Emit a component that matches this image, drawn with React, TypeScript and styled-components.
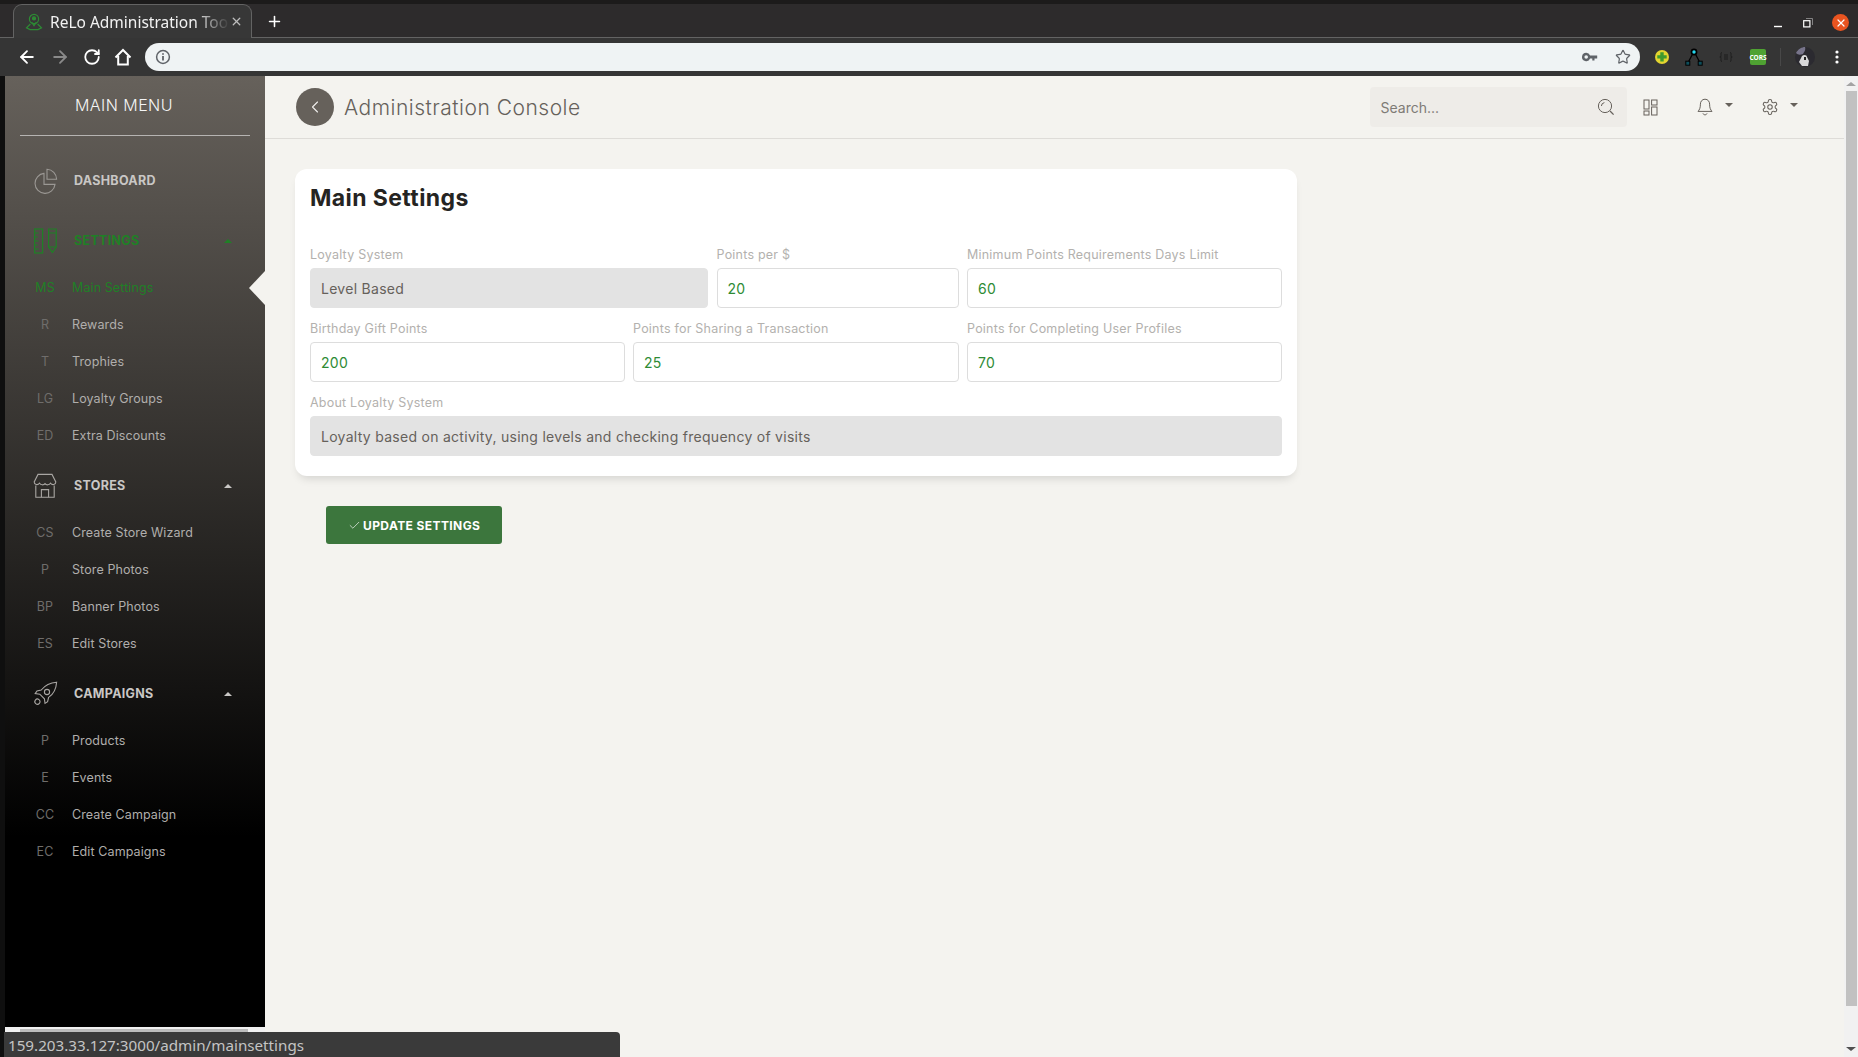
import React from 'react';
import styled, { createGlobalStyle } from 'styled-components';
import { ArrowLeft, ArrowRight, RotateCw, Star, Plus, X, Check, ChevronLeft } from 'lucide-react';

const GlobalStyle = createGlobalStyle`
  html, body {
    margin: 0;
    padding: 0;
    height: 100%;
    overflow: hidden;
    background: #f4f3ef;
  }
  #root { height: 100%; }
  * { box-sizing: border-box; }
`;

const uiFont = `Inter, "Open Sans", sans-serif`;
const chromeFont = `"Noto Sans", "Open Sans", sans-serif`;

const Page = styled.div`
  position: relative;
  display: flex;
  flex-direction: column;
  height: 100vh;
  overflow: hidden;
  font-family: ${uiFont};
`;

/* browser chrome */
const TabStrip = styled.div`
  display: flex;
  align-items: flex-end;
  height: 38px;
  padding-left: 13px;
  background: #2d2b2c;
  border-top: 4px solid #1c1b1b;
  border-bottom: 1px solid #636363;
`;

const Tab = styled.div`
  display: flex;
  align-items: center;
  width: 239px;
  height: 34px;
  margin-bottom: -1px;
  padding: 0 8px 0 11px;
  background: #373737;
  border: 1px solid #636363;
  border-bottom: none;
  border-radius: 9px 9px 0 0;
  color: #f2f2f2;
  font-family: ${chromeFont};
  font-size: 15.5px;
`;

const TabTitle = styled.span`
  flex: 1;
  margin-left: 7px;
  white-space: nowrap;
  -webkit-mask-image: linear-gradient(to right, #000 80%, transparent 100%);
  mask-image: linear-gradient(to right, #000 80%, transparent 100%);
`;

const NewTab = styled.div`
  display: flex;
  margin: 0 0 7px 14px;
  color: #fff;
`;

const WindowControls = styled.div`
  display: flex;
  align-items: center;
  gap: 19px;
  margin-left: auto;
  margin-right: 9px;
  margin-bottom: 6px;
  color: #fff;
`;

const CloseDot = styled.div`
  display: flex;
  align-items: center;
  justify-content: center;
  width: 17px;
  height: 17px;
  border-radius: 50%;
  background: #e95420;
  color: #fff;
`;

const Toolbar = styled.div`
  display: flex;
  align-items: center;
  height: 38px;
  padding: 0 10px 0 17px;
  background: #353535;
  color: #fff;
`;

const NavButtons = styled.div`
  display: flex;
  align-items: center;
  gap: 13px;
  margin-right: 13px;
`;

const Omnibox = styled.div`
  display: flex;
  flex: 1;
  align-items: center;
  height: 28px;
  padding: 0 9px 0 10px;
  border-radius: 14px;
  background: #eff3f4;
  color: #5f6368;
`;

const OmniRight = styled.div`
  display: flex;
  align-items: center;
  gap: 17px;
  margin-left: auto;
`;

const Extensions = styled.div`
  display: flex;
  align-items: center;
  margin-left: 11px;
  gap: 10px;
`;

const ExtSlot = styled.div`
  display: flex;
  align-items: center;
  justify-content: center;
  width: 22px;
  height: 28px;
`;

const CorsBadge = styled.div`
  display: flex;
  align-items: center;
  justify-content: center;
  width: 16px;
  height: 16px;
  border-radius: 2px;
  background: #4fa232;
  color: #fff;
  font-family: ${chromeFont};
  font-size: 6.5px;
  font-weight: 700;
`;

const ExtDivider = styled.div`
  width: 1px;
  height: 18px;
  margin: 0 3px 0 1px;
  background: #484848;
`;

/* page body */
const Body = styled.div`
  display: flex;
  flex: 1;
  min-height: 0;
  border-left: 5px solid #0f0f0f;
`;

const SideColumn = styled.div`
  display: flex;
  flex-direction: column;
  flex: 0 0 260px;
`;

const Sidebar = styled.aside`
  flex: 1;
  padding: 0;
  background: linear-gradient(to bottom, #66615b 0%, #000 80%);
`;

const SideScroll = styled.div`
  flex: 0 0 30px;
  padding: 2px 17px 0 15px;
  background: #f1f1f1;
`;

const SideScrollThumb = styled.div`
  height: 10px;
  background: #bcbcbc;
`;

const Brand = styled.div`
  height: 60px;
  margin: 0 15px;
  padding: 19px 0 0 55px;
  border-bottom: 1px solid rgba(255, 255, 255, 0.55);
  color: #f5f5f5;
  font-size: 16px;
  font-weight: 300;
  letter-spacing: 0.45px;
  line-height: 20px;
`;

const SideNav = styled.nav`
  padding-top: 22px;
`;

const Group = styled.div`
  margin-bottom: 9px;
  &:first-child {
    margin-bottom: 14px;
  }
`;

const GroupHead = styled.div<{ $active?: boolean }>`
  display: flex;
  align-items: center;
  height: 46px;
  padding: 0 33px 1px 25px;
  color: ${({ $active }) => ($active ? '#1f8026' : '#c9c7c5')};
  font-size: 12.5px;
  font-weight: 700;
  letter-spacing: 0.3px;
`;

const IconBox = styled.span`
  display: flex;
  align-items: center;
  justify-content: center;
  width: 30px;
  margin-right: 14px;
`;

const UpCaret = styled.span`
  margin-left: auto;
  border-left: 4px solid transparent;
  border-right: 4px solid transparent;
  border-bottom: 4px solid currentColor;
`;

const SubList = styled.div`
  margin-top: 5px;
`;

const SubItem = styled.div<{ $active?: boolean }>`
  position: relative;
  display: flex;
  align-items: center;
  height: 37px;
  padding-left: 25px;
  color: ${({ $active }) => ($active ? '#1f8026' : '#b0aeac')};
  font-size: 12.5px;
  letter-spacing: 0.1px;
`;

const SubAbbr = styled.span<{ $active?: boolean }>`
  width: 30px;
  margin-right: 12px;
  text-align: center;
  color: ${({ $active }) => ($active ? '#1f8026' : '#6f6d6b')};
`;

const ActiveNotch = styled.span`
  position: absolute;
  right: 0;
  top: 2px;
  border-top: 17px solid transparent;
  border-bottom: 17px solid transparent;
  border-right: 16px solid #f4f3ef;
`;

const Main = styled.main`
  display: flex;
  flex-direction: column;
  flex: 1;
  min-width: 0;
`;

const TopBar = styled.header`
  display: flex;
  align-items: center;
  flex: 0 0 63px;
  padding: 0 46px 0 31px;
  border-bottom: 1px solid #dedcd8;
`;

const BackCircle = styled.div`
  display: flex;
  align-items: center;
  justify-content: center;
  width: 38px;
  height: 38px;
  margin-right: 10px;
  border-radius: 50%;
  background: #66615b;
  color: #f0efed;
`;

const PageTitle = styled.div`
  color: #66615b;
  font-size: 21px;
  font-weight: 300;
  letter-spacing: 0.5px;
`;

const SearchBox = styled.div`
  display: flex;
  align-items: center;
  justify-content: space-between;
  width: 257px;
  height: 40px;
  margin-left: auto;
  padding: 0 12px 0 11px;
  border-radius: 4px;
  background: #eeece8;
  color: #7e7b76;
  font-size: 14px;
`;

const TopIcon = styled.div<{ $gap: number }>`
  display: flex;
  align-items: center;
  margin-left: ${({ $gap }) => $gap}px;
  color: #66615b;
`;

const DownCaret = styled.span<{ $gap: number }>`
  margin-left: ${({ $gap }) => $gap}px;
  margin-bottom: 4px;
  border-left: 4px solid transparent;
  border-right: 4px solid transparent;
  border-top: 4px solid #66615b;
`;

const Content = styled.div`
  padding: 30px;
`;

const Card = styled.section`
  width: 1002px;
  padding: 15px;
  border-radius: 12px;
  background: #fff;
  box-shadow: 0 6px 10px -4px rgba(0, 0, 0, 0.15);
`;

const CardTitle = styled.h2`
  margin: 0 0 31px;
  color: #252422;
  font-size: 23px;
  font-weight: 700;
  letter-spacing: 0.4px;
  line-height: 28px;
`;

const FieldRow = styled.div<{ $cols: string }>`
  display: grid;
  grid-template-columns: ${({ $cols }) => $cols};
  column-gap: 8.5px;
  margin-bottom: 9px;
  &:last-child {
    margin-bottom: 5px;
  }
`;

const Label = styled.div`
  height: 25px;
  color: #b3b1ae;
  font-size: 12.5px;
  letter-spacing: 0.22px;
  line-height: 24px;
  white-space: nowrap;
`;

const Input = styled.div<{ $disabled?: boolean }>`
  display: flex;
  align-items: center;
  height: 40px;
  padding: 0 10px;
  border: 1px solid ${({ $disabled }) => ($disabled ? '#e3e3e3' : '#dddddd')};
  border-radius: 4px;
  background: ${({ $disabled }) => ($disabled ? '#e3e3e3' : '#fff')};
  color: ${({ $disabled }) => ($disabled ? '#66615b' : '#2e8b34')};
  font-size: 14px;
  letter-spacing: 0.28px;
`;

const SubmitButton = styled.button`
  display: flex;
  align-items: center;
  gap: 2px;
  width: 176px;
  height: 38px;
  margin: 30px 0 0 31px;
  padding: 0 0 0 22px;
  border: none;
  border-radius: 3px;
  background: #3c763d;
  color: #fff;
  font-family: ${uiFont};
  font-size: 12px;
  font-weight: 700;
  letter-spacing: 0.4px;
`;

const PageScroll = styled.div`
  display: flex;
  flex-direction: column;
  flex: 0 0 14px;
  align-items: center;
  background: #f1f1f1;
`;

const ScrollArrowUp = styled.div`
  margin: 6px 0 5px;
  border-left: 5px solid transparent;
  border-right: 5px solid transparent;
  border-bottom: 4px solid #a3a3a3;
`;

const ScrollArrowDown = styled.div`
  margin-top: auto;
  margin-bottom: 6px;
  border-left: 5px solid transparent;
  border-right: 5px solid transparent;
  border-top: 4px solid #505050;
`;

const ScrollThumb = styled.div`
  width: 11px;
  height: 915px;
  background: #c1c1c1;
`;

const StatusBubble = styled.div`
  position: absolute;
  left: 4px;
  bottom: 0;
  display: flex;
  align-items: center;
  width: 616px;
  height: 25px;
  padding-left: 4px;
  border-radius: 0 4px 0 0;
  background: #3a3a3a;
  color: #c4c4c4;
  font-family: ${chromeFont};
  font-size: 15.2px;
`;

const FaviconIcon = () => (
  <svg width="18" height="18" viewBox="0 0 18 18" fill="none" stroke="#2d8a34" strokeWidth="1.2">
    <circle cx="9" cy="6" r="4.6" />
    <circle cx="9" cy="5.4" r="1.5" fill="#2d8a34" />
    <path d="M6.6 9.2 9 12.6l2.4-3.4" />
    <path d="M5.4 11 1.5 14.8 5 16.6h8l3.5-1.8-3.9-3.8" />
  </svg>
);

const HomeIcon = () => (
  <svg width="18" height="18" viewBox="0 0 18 18" fill="none" stroke="#fff" strokeWidth="2">
    <path d="M1.5 9.5 9 2l7.5 7.5" strokeLinejoin="miter" />
    <path d="M4.2 8v8.4h9.6V8" />
  </svg>
);

const InfoIcon = () => (
  <svg width="16" height="16" viewBox="0 0 16 16" fill="none" stroke="#5f6368" strokeWidth="1.5">
    <circle cx="8" cy="8" r="6.4" />
    <path d="M8 7v4.6M8 4.2v1.6" strokeWidth="1.8" />
  </svg>
);

const KeyIcon = () => (
  <svg width="16" height="10" viewBox="0 0 16 10" fill="#5f6368">
    <path d="M4.2.8a4.2 4.2 0 1 0 3.9 5.8h2.2v2h2.2v-2h2.7V3.4H8.1A4.2 4.2 0 0 0 4.2.8Zm0 2.4a1.8 1.8 0 1 1 0 3.6 1.8 1.8 0 0 1 0-3.6Z" />
  </svg>
);

const MinIcon = () => (
  <svg width="10" height="10" viewBox="0 0 10 10" stroke="#fff" strokeWidth="1.4">
    <path d="M0 8.5h8" />
  </svg>
);

const RestoreIcon = () => (
  <svg width="10" height="10" viewBox="0 0 10 10" fill="none" stroke="#fff">
    <rect x="0.7" y="2.7" width="6.2" height="6.2" strokeWidth="1.2" />
    <path d="M3 .5h6.5V7" stroke="#999" strokeWidth="0.8" />
  </svg>
);

const ExtAddonIcon = () => (
  <svg width="16" height="16" viewBox="0 0 16 16">
    <circle cx="8" cy="8" r="7" fill="#e3d530" />
    <path d="M6.3 3.2h3.4v3h3v3.4h-3v3H6.3v-3h-3V6.2h3Z" fill="#3f9a2e" />
  </svg>
);

const ExtNodeIcon = () => (
  <svg width="18" height="18" viewBox="0 0 18 18" fill="none">
    <path d="M7.6 6 3.4 14M10.4 6l4.2 8" stroke="#000" strokeWidth="1.3" />
    <circle cx="9" cy="4" r="3.4" fill="#000" />
    <circle cx="9" cy="4" r="1.7" fill="#25d7ee" />
    <rect x="0.8" y="13.2" width="4" height="4" fill="#0d4f5c" stroke="#000" />
    <rect x="13.2" y="13.2" width="4" height="4" fill="#0d4f5c" stroke="#000" />
  </svg>
);

const ExtJsonIcon = () => (
  <svg width="14" height="10" viewBox="0 0 14 10" fill="none" stroke="#1d1d1d" strokeWidth="1">
    <path d="M3 .5C1.6.5 2 2 2 3.5S1.6 5 .8 5C1.6 5 2 5 2 6.5S1.6 9.5 3 9.5M11 .5c1.4 0 1 1.5 1 3S12.4 5 13.2 5C12.4 5 12 5 12 6.5s.4 3-1 3" />
    <path d="M5 3h4M5 5h4M5 7h4" />
  </svg>
);

const AvatarIcon = () => (
  <svg width="20" height="20" viewBox="0 0 20 20">
    <circle cx="10" cy="10" r="10" fill="#2b2a30" />
    <path d="M1 6c2-4 6-6 9-6 1 3-1 5-2 7-3 1-5 1-7-1Z" fill="#77748a" />
    <path d="M7 9c2-2 5-1 5 1l2 4-1 5H7l-3-4Z" fill="#d8d8d8" />
    <path d="M9 10h2v3H9Z" fill="#222" />
  </svg>
);

const DotsIcon = () => (
  <svg width="4" height="14" viewBox="0 0 4 14" fill="#fff">
    <circle cx="2" cy="2" r="1.6" />
    <circle cx="2" cy="7" r="1.6" />
    <circle cx="2" cy="12" r="1.6" />
  </svg>
);

const PieIcon = () => (
  <svg width="26" height="26" viewBox="0 0 26 26" fill="none" stroke="#9b9894" strokeWidth="1.1">
    <path d="M12 5.4a10 10 0 1 0 11 11H12Z" />
    <path d="M15 1.2a10 10 0 0 1 9.6 10H15Z" />
  </svg>
);

const RulerPencilIcon = () => (
  <svg width="24" height="26" viewBox="0 0 24 26" fill="none" stroke="#1f8026" strokeWidth="1.2">
    <rect x="1.6" y="1" width="8" height="24" />
    <path d="M1.6 5h4M1.6 9h3M1.6 13h4M1.6 17h3M1.6 21h4" />
    <path d="M15.6 1h7.6v18l-3.8 5.4-3.8-5.4Z" />
    <path d="M15.6 5h7.6M15.6 19h7.6" />
  </svg>
);

const ShopIcon = () => (
  <svg width="24" height="26" viewBox="0 0 24 26" fill="none" stroke="#a9a6a3" strokeWidth="1.1">
    <path d="M5 1.4h14l3.8 7.6c0 3-3.6 3.4-5.4 1.2-1.2 2-4 2.2-5.4.4-1.4 1.8-4.2 1.6-5.4-.4C4.8 12.4 1.2 12 1.2 9Z" />
    <path d="M2.8 12.4v11.8h18.4V12.4" />
    <path d="M8.4 24.2v-7.6h7.2v7.6" />
  </svg>
);

const RocketIcon = () => (
  <svg width="26" height="26" viewBox="0 0 26 26" fill="none" stroke="#a9a6a3" strokeWidth="1.1">
    <path d="M24.6 1.2c-6.6.4-11.6 3-15.4 7.8L5 10l-1.8 2.6 4.6.6 4.6 4.6.6 4.6 2.6-1.8 1-4.2C21.6 13 24.2 7.8 24.6 1.2Z" />
    <circle cx="15" cy="11" r="2.6" />
    <path d="M7 18.6a2.6 2.6 0 1 0 .4 3.8 2.6 2.6 0 0 0-.4-3.8Z" />
  </svg>
);

const SearchIcon = () => (
  <svg width="18" height="18" viewBox="0 0 18 18" fill="none" stroke="#66615b" strokeWidth="1">
    <circle cx="8" cy="8" r="6.6" />
    <path d="M13 13l3.6 3.6" strokeWidth="1.3" />
    <path d="M4.4 8a3.6 3.6 0 0 1 3-3.4" />
  </svg>
);

const LayoutIcon = () => (
  <svg width="15" height="17" viewBox="0 0 15 17" fill="none" stroke="#66615b" strokeWidth="1">
    <rect x="1" y="1" width="5" height="9" />
    <rect x="8.6" y="1" width="5.4" height="5" />
    <rect x="1" y="12" width="5" height="4" />
    <rect x="8.6" y="8" width="5.4" height="8" />
  </svg>
);

const BellIcon = () => (
  <svg width="16" height="18" viewBox="0 0 16 18" fill="none" stroke="#66615b" strokeWidth="1">
    <path d="M8 1.2c-3 0-4.6 2.4-4.6 5 0 4-1 5.6-2.4 7.2h14c-1.4-1.6-2.4-3.2-2.4-7.2 0-2.6-1.6-5-4.6-5Z" />
    <path d="M6 15.4c.3 1 1 1.4 2 1.4s1.7-.4 2-1.4" />
  </svg>
);

const GearIcon = () => (
  <svg width="18" height="18" viewBox="0 0 24 24" fill="none" stroke="#66615b" strokeWidth="1.4" strokeLinejoin="round">
    <path d="M12.22 2h-.44a2 2 0 0 0-2 2v.18a2 2 0 0 1-1 1.73l-.43.25a2 2 0 0 1-2 0l-.15-.08a2 2 0 0 0-2.73.73l-.22.38a2 2 0 0 0 .73 2.73l.15.1a2 2 0 0 1 1 1.72v.51a2 2 0 0 1-1 1.74l-.15.09a2 2 0 0 0-.73 2.73l.22.38a2 2 0 0 0 2.73.73l.15-.08a2 2 0 0 1 2 0l.43.25a2 2 0 0 1 1 1.73V20a2 2 0 0 0 2 2h.44a2 2 0 0 0 2-2v-.18a2 2 0 0 1 1-1.73l.43-.25a2 2 0 0 1 2 0l.15.08a2 2 0 0 0 2.73-.73l.22-.39a2 2 0 0 0-.73-2.73l-.15-.08a2 2 0 0 1-1-1.74v-.5a2 2 0 0 1 1-1.74l.15-.09a2 2 0 0 0 .73-2.73l-.22-.38a2 2 0 0 0-2.73-.73l-.15.08a2 2 0 0 1-2 0l-.43-.25a2 2 0 0 1-1-1.73V4a2 2 0 0 0-2-2Z" />
    <circle cx="12" cy="12" r="3" />
  </svg>
);

const menu = [
  { title: 'DASHBOARD', icon: <PieIcon />, items: [] as [string, string][] },
  {
    title: 'SETTINGS',
    icon: <RulerPencilIcon />,
    active: true,
    items: [
      ['MS', 'Main Settings'],
      ['R', 'Rewards'],
      ['T', 'Trophies'],
      ['LG', 'Loyalty Groups'],
      ['ED', 'Extra Discounts'],
    ] as [string, string][],
  },
  {
    title: 'STORES',
    icon: <ShopIcon />,
    items: [
      ['CS', 'Create Store Wizard'],
      ['P', 'Store Photos'],
      ['BP', 'Banner Photos'],
      ['ES', 'Edit Stores'],
    ] as [string, string][],
  },
  {
    title: 'CAMPAIGNS',
    icon: <RocketIcon />,
    items: [
      ['P', 'Products'],
      ['E', 'Events'],
      ['CC', 'Create Campaign'],
      ['EC', 'Edit Campaigns'],
    ] as [string, string][],
  },
];

const fieldRows = [
  {
    cols: '398px 242px 315px',
    fields: [
      { label: 'Loyalty System', value: 'Level Based', disabled: true },
      { label: 'Points per $', value: '20' },
      { label: 'Minimum Points Requirements Days Limit', value: '60' },
    ],
  },
  {
    cols: '314.5px 325.5px 315px',
    fields: [
      { label: 'Birthday Gift Points', value: '200' },
      { label: 'Points for Sharing a Transaction', value: '25' },
      { label: 'Points for Completing User Profiles', value: '70' },
    ],
  },
  {
    cols: '972px',
    fields: [
      {
        label: 'About Loyalty System',
        value: 'Loyalty based on activity, using levels and checking frequency of visits',
        disabled: true,
      },
    ],
  },
];

const App: React.FC = () => (
  <Page>
    <GlobalStyle />
    <TabStrip>
      <Tab>
        <FaviconIcon />
        <TabTitle>ReLo Administration Too</TabTitle>
        <X size={13} color="#bdbdbd" strokeWidth={2.4} />
      </Tab>
      <NewTab>
        <Plus size={17} strokeWidth={2.2} />
      </NewTab>
      <WindowControls>
        <MinIcon />
        <RestoreIcon />
        <CloseDot>
          <X size={12} strokeWidth={2.4} />
        </CloseDot>
      </WindowControls>
    </TabStrip>

    <Toolbar>
      <NavButtons>
        <ArrowLeft size={20} strokeWidth={2.2} />
        <ArrowRight size={20} strokeWidth={2.2} color="#8a8a8a" />
        <RotateCw size={18} strokeWidth={2.4} />
        <HomeIcon />
      </NavButtons>
      <Omnibox>
        <InfoIcon />
        <OmniRight>
          <KeyIcon />
          <Star size={16} strokeWidth={1.8} />
        </OmniRight>
      </Omnibox>
      <Extensions>
        <ExtSlot>
          <ExtAddonIcon />
        </ExtSlot>
        <ExtSlot>
          <ExtNodeIcon />
        </ExtSlot>
        <ExtSlot>
          <ExtJsonIcon />
        </ExtSlot>
        <ExtSlot>
          <CorsBadge>CORS</CorsBadge>
        </ExtSlot>
        <ExtDivider />
        <ExtSlot>
          <AvatarIcon />
        </ExtSlot>
        <ExtSlot>
          <DotsIcon />
        </ExtSlot>
      </Extensions>
    </Toolbar>

    <Body>
      <SideColumn>
        <Sidebar>
          <Brand>MAIN MENU</Brand>
          <SideNav>
            {menu.map((group) => (
              <Group key={group.title}>
                <GroupHead $active={group.active}>
                  <IconBox>{group.icon}</IconBox>
                  {group.title}
                  {group.items.length > 0 && <UpCaret />}
                </GroupHead>
                {group.items.length > 0 && (
                  <SubList>
                    {group.items.map(([abbr, name]) => {
                      const isActive = name === 'Main Settings';
                      return (
                        <SubItem key={name} $active={isActive}>
                          <SubAbbr $active={isActive}>{abbr}</SubAbbr>
                          {name}
                          {isActive && <ActiveNotch />}
                        </SubItem>
                      );
                    })}
                  </SubList>
                )}
              </Group>
            ))}
          </SideNav>
        </Sidebar>
        <SideScroll>
          <SideScrollThumb />
        </SideScroll>
      </SideColumn>

      <Main>
        <TopBar>
          <BackCircle>
            <ChevronLeft size={20} strokeWidth={1.3} />
          </BackCircle>
          <PageTitle>Administration Console</PageTitle>
          <SearchBox>
            Search...
            <SearchIcon />
          </SearchBox>
          <TopIcon $gap={16}>
            <LayoutIcon />
          </TopIcon>
          <TopIcon $gap={39}>
            <BellIcon />
            <DownCaret $gap={12} />
          </TopIcon>
          <TopIcon $gap={28.5}>
            <GearIcon />
            <DownCaret $gap={11} />
          </TopIcon>
        </TopBar>
        <Content>
          <Card>
            <CardTitle>Main Settings</CardTitle>
            {fieldRows.map((row) => (
              <FieldRow key={row.fields[0].label} $cols={row.cols}>
                {row.fields.map((field) => (
                  <div key={field.label}>
                    <Label>{field.label}</Label>
                    <Input $disabled={field.disabled}>{field.value}</Input>
                  </div>
                ))}
              </FieldRow>
            ))}
          </Card>
          <SubmitButton>
            <Check size={13} strokeWidth={1.2} />
            UPDATE SETTINGS
          </SubmitButton>
        </Content>
      </Main>

      <PageScroll>
        <ScrollArrowUp />
        <ScrollThumb />
        <ScrollArrowDown />
      </PageScroll>
    </Body>

    <StatusBubble>159.203.33.127:3000/admin/mainsettings</StatusBubble>
  </Page>
);

export default App;
